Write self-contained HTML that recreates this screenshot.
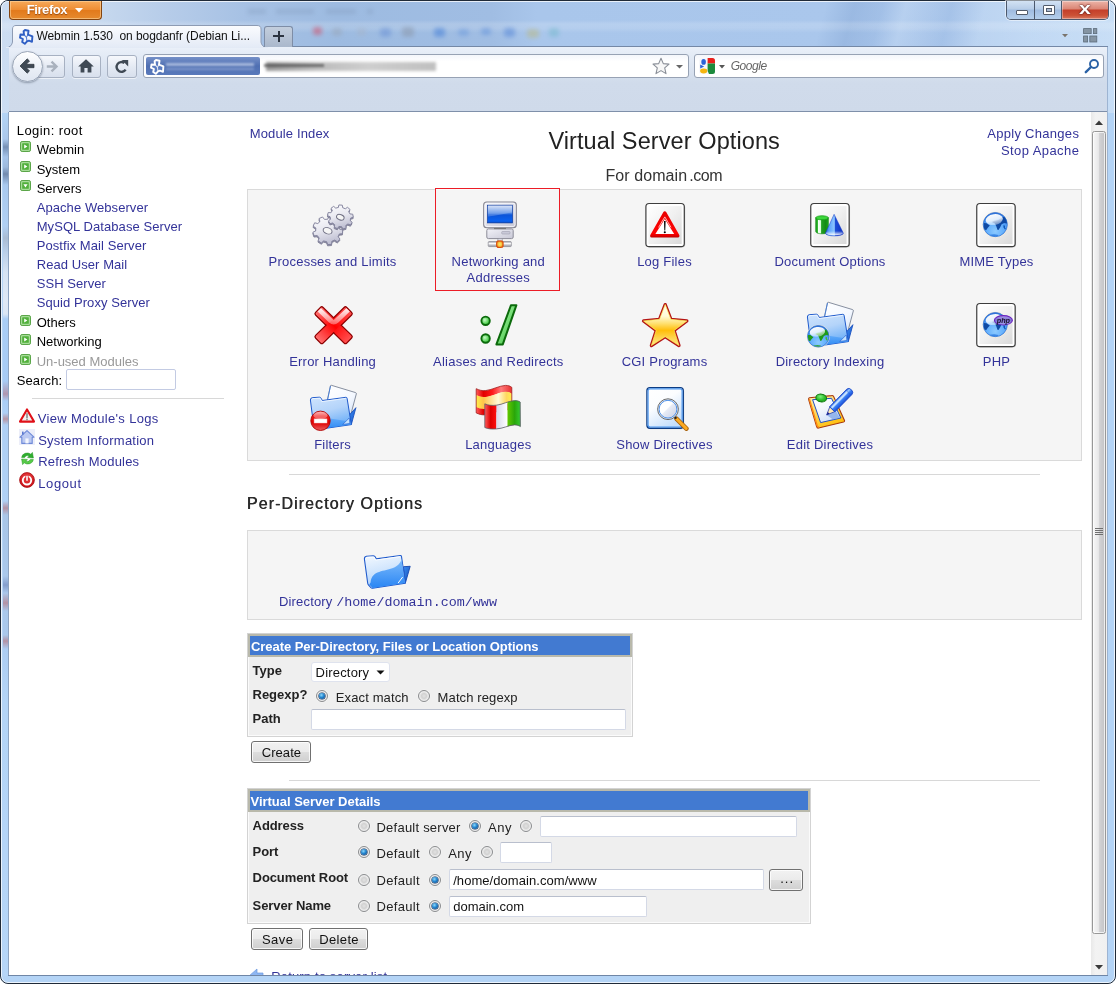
<!DOCTYPE html>
<html><head><meta charset="utf-8"><title>Webmin 1.530 on bogdanfr (Debian Linux)</title>
<style>
*{box-sizing:border-box;margin:0;padding:0}
html,body{width:1119px;height:984px;overflow:hidden}
body{position:relative;background:#b9d1ea;font-family:"Liberation Sans",Arial,sans-serif;font-size:13px;color:#000}
.abs{position:absolute}
.lnk{color:#333399}
#content{left:9px;top:112px;width:1083px;height:863px;background:#fff;overflow:hidden}
#inner{left:-9px;top:-112px;width:1119px;height:984px;will-change:transform}
.t{position:absolute;white-space:nowrap}
.panel{position:absolute;background:#f5f5f5;border:1px solid #dadada}
.hr{position:absolute;height:1px;background:#d8d8d8}
.inp{position:absolute;background:#fff;border:1px solid #d4d9e6;border-top-color:#b9bfcd;border-radius:2px}
.btn{position:absolute;border:1px solid #707070;border-radius:3px;background:linear-gradient(#f2f2f2 0,#ebebeb 48%,#dddddd 52%,#cfcfcf 100%);box-shadow:inset 0 0 0 1px rgba(255,255,255,.8)}
.radio{position:absolute;width:12px;height:12px;border-radius:50%;border:1px solid #8a8c8e;background:radial-gradient(circle at 50% 50%,#e2e2e2 0,#d2d2d2 35%,#ececec 60%,#fbfbfb 100%);box-shadow:0 0 0 .5px rgba(255,255,255,.5)}
.radio.on::after{content:"";position:absolute;left:2px;top:2px;width:6px;height:6px;border-radius:50%;background:radial-gradient(circle at 40% 35%,#8fd8fa 0,#2386d0 45%,#0c3c7c 100%);box-shadow:0 0 0 .6px #1a3a66}
.tbl{position:absolute;background:#efefef;border:1px solid #d3d3d3;box-shadow:inset 1px 0 0 #fbfbfb,inset -1px -1px 0 #fbfbfb}
.th{position:absolute;left:0;top:0;right:0;background:#427ad1;border:2px solid #b9b9ab}
#glass{left:0;top:0;width:1119px;height:984px;background:#bcd3ec;border-radius:8px 8px 0 0;overflow:hidden}
#nav{left:9px;top:47px;width:1099px;height:65px;background:#cfdaea}
body{background:#fff}
#win{left:0;top:0;width:1116px;height:984px;border:1px solid #1f2a38;border-radius:8px;overflow:hidden;background:#b4d4f6}
#glassfx{left:0;top:0;width:1117px;height:112px;background:linear-gradient(rgba(255,255,255,0) 0,rgba(255,255,255,0) 19px,rgba(255,255,255,.16) 23px,rgba(255,255,255,.14) 27px,rgba(255,255,255,0) 32px),linear-gradient(105deg,rgba(140,170,215,0) 72%,rgba(135,168,214,.45) 74.5%,rgba(140,172,218,.3) 77%,rgba(255,255,255,.12) 79%,rgba(140,172,218,.28) 83%,rgba(255,255,255,.1) 86%,rgba(255,255,255,0) 100%),linear-gradient(90deg,#ccddf2 0,#c6d8ee 9%,#b6cce9 15%,#a6c1e4 22%,#9dbbe1 30%,#a0bde3 44%,#a9c6eb 48%,#aac7ec 75%,#afcbee 85%,#bdd6f3 92%,#c8def6 100%)}
#win::after{content:"";position:absolute;left:0;top:0;right:0;bottom:0;border:1px solid rgba(255,255,255,.75);border-radius:7px;pointer-events:none}
#nav{left:9px;top:47px;width:1098px;height:65px;background:linear-gradient(#eaf0f9 0,#dbe4f1 30%,#d0dbeb 55%,#cfdaea 100%)}
#ffbtn{left:9px;top:1px;width:93px;height:19px;border-top:none !important;border:1px solid #83440f;border-radius:0 0 4px 4px;background:linear-gradient(#f6a95a 0,#ee8d33 48%,#e27a1c 52%,#e68a2e 100%);box-shadow:inset 0 0 0 1px rgba(255,220,170,.55)}
#wc{left:1006px;top:1px;width:103px;height:19px;border:1px solid #4c586c;border-top:none;border-radius:0 0 5px 5px;overflow:hidden;box-shadow:0 0 0 1px rgba(255,255,255,.5)}
#wcmin{left:0;top:0;width:28px;height:18px;background:linear-gradient(#d3e2f4 0,#b7cde8 45%,#9fbbe0 50%,#b5cfec 100%);border-right:1px solid #4c586c}
#wcmax{left:28px;top:0;width:27px;height:18px;background:linear-gradient(#d3e2f4 0,#b7cde8 45%,#9fbbe0 50%,#b5cfec 100%);border-right:1px solid #4c586c}
#wcclose{left:55px;top:0;width:47px;height:18px;background:linear-gradient(#ecb4a8 0,#dc8878 42%,#c4402a 52%,#cc5236 80%,#d87860 100%);box-shadow:inset 0 0 0 1px rgba(255,255,255,.35)}
.nb{position:absolute;border:1px solid #a7b1c2;border-radius:3px;background:linear-gradient(#f6f8fc,#e3e9f3 55%,#d8e0ed);box-shadow:0 1px 0 rgba(255,255,255,.6)}
#front{left:0;top:0;width:1119px;height:984px;will-change:transform;pointer-events:none}
</style></head><body>
<div id="win" class="abs"><div id="glassfx" class="abs"></div>
<div class="abs" style="left:311.5px;top:26.0px;width:9px;height:8px;background:#d0506a;opacity:0.55;filter:blur(2.2px);border-radius:3px"></div><div class="abs" style="left:331.0px;top:27.0px;width:10px;height:8px;background:#9aa6b8;opacity:0.5;filter:blur(2.2px);border-radius:3px"></div><div class="abs" style="left:355.5px;top:27.0px;width:9px;height:8px;background:#a8b3c4;opacity:0.4;filter:blur(2.2px);border-radius:3px"></div><div class="abs" style="left:378.5px;top:26.5px;width:11px;height:9px;background:#6c93d6;opacity:0.55;filter:blur(2.2px);border-radius:3px"></div><div class="abs" style="left:401.0px;top:26.0px;width:12px;height:10px;background:#8b98ac;opacity:0.55;filter:blur(2.2px);border-radius:3px"></div><div class="abs" style="left:432.5px;top:26.5px;width:11px;height:9px;background:#4f86d8;opacity:0.6;filter:blur(2.2px);border-radius:3px"></div><div class="abs" style="left:456.5px;top:27.5px;width:11px;height:7px;background:#6a98dc;opacity:0.5;filter:blur(2.2px);border-radius:3px"></div><div class="abs" style="left:480.0px;top:26.5px;width:10px;height:7px;background:#5f90da;opacity:0.5;filter:blur(2.2px);border-radius:3px"></div><div class="abs" style="left:502.5px;top:26.5px;width:11px;height:9px;background:#5a8ad8;opacity:0.55;filter:blur(2.2px);border-radius:3px"></div><div class="abs" style="left:526.0px;top:27.5px;width:12px;height:9px;background:#b9b98a;opacity:0.55;filter:blur(2.2px);border-radius:3px"></div><div class="abs" style="left:548.0px;top:26.5px;width:10px;height:9px;background:#6db7c8;opacity:0.45;filter:blur(2.2px);border-radius:3px"></div><div class="abs" style="left:247px;top:8px;width:18px;height:5px;background:#7f97b8;opacity:.35;filter:blur(2px)"></div><div class="abs" style="left:275px;top:8px;width:38px;height:5px;background:#7f97b8;opacity:.35;filter:blur(2px)"></div><div class="abs" style="left:325px;top:8px;width:30px;height:5px;background:#7f97b8;opacity:.35;filter:blur(2px)"></div><div class="abs" style="left:366px;top:8px;width:6px;height:5px;background:#7f97b8;opacity:.35;filter:blur(2px)"></div><div class="abs" style="left:2px;top:112px;width:6px;height:863px;background:linear-gradient(180deg,#b4d4f6 0px,#a9c6ea 26px,#6f88ad 34px,#a4c2e8 44px,#9ab6da 54px,#6b82a6 61px,#a8c8ee 72px,#b0cff3 113px,#a9b9cf 125px,#b9cde6 138px,#d9e4f2 159px,#e4ebf5 188px,#dfe8f4 201px,#a9cdf6 206px,#a6caf4 268px,#b090a8 281px,#a9cdf6 288px,#aecff5 300px,#b9909c 306px,#aecff5 312px,#b0d0f5 388px,#b48c9c 395px,#a8c4e6 402px,#a9c7ea 463px,#7f98c8 472px,#a9c7ea 480px,#b48c9c 490px,#a9c7ea 498px,#a9c7ea 522px,#b48c9c 528px,#acccf2 536px,#b4d4f6 588px,#b6d6f8 863px);opacity:.9"></div>
</div>
<div id="nav" class="abs"></div>
<div class="abs" style="left:9px;top:46px;width:1099px;height:1px;background:#7488a6"></div>
<div id="content" class="abs"><div id="inner" class="abs">
<div class="t " style="top:124.00px;font-size:13px;line-height:13px;left:16.80px;letter-spacing:0.406px;">Login: root</div>
<svg class="abs" style="left:20px;top:141.00px" width="11" height="11" viewBox="0 0 11 11"><rect x="0.5" y="0.5" width="10" height="10" rx="1.6" fill="#a6dc98" stroke="#5aa548"/><rect x="2.2" y="2.2" width="6.6" height="6.6" rx="0.6" fill="#52b03c"/><path d="M4.2 3.4 L7.4 5.5 L4.2 7.6 Z" fill="#fff"/></svg>
<div class="t " style="top:142.60px;font-size:13px;line-height:13px;color:#000;left:36.70px;letter-spacing:0px;">Webmin</div>
<svg class="abs" style="left:20px;top:161.00px" width="11" height="11" viewBox="0 0 11 11"><rect x="0.5" y="0.5" width="10" height="10" rx="1.6" fill="#a6dc98" stroke="#5aa548"/><rect x="2.2" y="2.2" width="6.6" height="6.6" rx="0.6" fill="#52b03c"/><path d="M4.2 3.4 L7.4 5.5 L4.2 7.6 Z" fill="#fff"/></svg>
<div class="t " style="top:162.60px;font-size:13px;line-height:13px;color:#000;left:36.70px;letter-spacing:0px;">System</div>
<svg class="abs" style="left:20px;top:180.10px" width="11" height="11" viewBox="0 0 11 11"><rect x="0.5" y="0.5" width="10" height="10" rx="1.6" fill="#a6dc98" stroke="#5aa548"/><rect x="2.2" y="2.2" width="6.6" height="6.6" rx="0.6" fill="#52b03c"/><path d="M3.4 4.2 L7.6 4.2 L5.5 7.4 Z" fill="#fff"/></svg>
<div class="t " style="top:181.70px;font-size:13px;line-height:13px;color:#000;left:36.70px;letter-spacing:0px;">Servers</div>
<div class="t lnk" style="top:201.10px;font-size:13px;line-height:13px;left:36.70px;letter-spacing:.07px;">Apache Webserver</div>
<div class="t lnk" style="top:220.10px;font-size:13px;line-height:13px;left:36.70px;letter-spacing:.07px;">MySQL Database Server</div>
<div class="t lnk" style="top:239.10px;font-size:13px;line-height:13px;left:36.70px;letter-spacing:.07px;">Postfix Mail Server</div>
<div class="t lnk" style="top:258.10px;font-size:13px;line-height:13px;left:36.70px;letter-spacing:.07px;">Read User Mail</div>
<div class="t lnk" style="top:277.10px;font-size:13px;line-height:13px;left:36.70px;letter-spacing:.07px;">SSH Server</div>
<div class="t lnk" style="top:296.10px;font-size:13px;line-height:13px;left:36.70px;letter-spacing:.07px;">Squid Proxy Server</div>
<svg class="abs" style="left:20px;top:314.50px" width="11" height="11" viewBox="0 0 11 11"><rect x="0.5" y="0.5" width="10" height="10" rx="1.6" fill="#a6dc98" stroke="#5aa548"/><rect x="2.2" y="2.2" width="6.6" height="6.6" rx="0.6" fill="#52b03c"/><path d="M4.2 3.4 L7.4 5.5 L4.2 7.6 Z" fill="#fff"/></svg>
<div class="t " style="top:316.10px;font-size:13px;line-height:13px;color:#000;left:36.70px;letter-spacing:0px;">Others</div>
<svg class="abs" style="left:20px;top:333.50px" width="11" height="11" viewBox="0 0 11 11"><rect x="0.5" y="0.5" width="10" height="10" rx="1.6" fill="#a6dc98" stroke="#5aa548"/><rect x="2.2" y="2.2" width="6.6" height="6.6" rx="0.6" fill="#52b03c"/><path d="M4.2 3.4 L7.4 5.5 L4.2 7.6 Z" fill="#fff"/></svg>
<div class="t " style="top:335.10px;font-size:13px;line-height:13px;color:#000;left:36.70px;letter-spacing:0px;">Networking</div>
<svg class="abs" style="left:20px;top:353.50px" width="11" height="11" viewBox="0 0 11 11"><rect x="0.5" y="0.5" width="10" height="10" rx="1.6" fill="#a6dc98" stroke="#5aa548"/><rect x="2.2" y="2.2" width="6.6" height="6.6" rx="0.6" fill="#52b03c"/><path d="M4.2 3.4 L7.4 5.5 L4.2 7.6 Z" fill="#fff"/></svg>
<div class="t " style="top:355.10px;font-size:13px;line-height:13px;color:#999;left:36.70px;letter-spacing:0px;">Un-used Modules</div>
<div class="t " style="top:374.10px;font-size:13px;line-height:13px;left:16.80px;letter-spacing:0.083px;">Search:</div>
<div class="inp" style="left:66px;top:369px;width:110px;height:21px;border-color:#c3cbe3"></div>
<div class="hr" style="left:32px;top:398px;width:192px"></div>
<svg class="abs" style="left:19px;top:408px" width="16" height="15" viewBox="0 0 16 15"><path d="M8 1.4 L15 13.6 L1 13.6 Z" fill="#f2f2f2" stroke="#e01018" stroke-width="2.1" stroke-linejoin="round"/><rect x="7.2" y="5.2" width="1.6" height="5.2" fill="#8a8a8a"/><rect x="7.2" y="11" width="1.6" height="1.3" fill="#8a8a8a"/></svg>
<div class="t lnk" style="top:411.70px;font-size:13px;line-height:13px;left:37.80px;letter-spacing:0.325px;">View Module&#x27;s Logs</div>
<svg class="abs" style="left:19px;top:429px" width="16" height="16" viewBox="0 0 16 16"><rect width="16" height="16" fill="#eceef9"/><path d="M8 1.6 L15 8.2 L13.2 8.2 L13.2 14.4 L2.8 14.4 L2.8 8.2 L1 8.2 Z" fill="#bccaf2" stroke="#6f8ad8" stroke-width="1.1" stroke-linejoin="round"/><rect x="6.4" y="9.4" width="3.2" height="5" fill="#f4f6fd"/><rect x="3" y="2.6" width="1.6" height="3" fill="#5a78d0"/></svg>
<div class="t lnk" style="top:433.80px;font-size:13px;line-height:13px;left:38.20px;letter-spacing:0.224px;">System Information</div>
<svg class="abs" style="left:20px;top:451px" width="15" height="15" viewBox="0 0 15 15"><path d="M1.6 6.4 A5.6 5 0 0 1 10.8 3.2 L12.4 1.4 L13.4 7 L7.6 6.6 L9.2 4.9 A3.6 3 0 0 0 4.6 6.4 Z" fill="#2fae2f" stroke="#1f921f" stroke-width=".5"/><path d="M13.4 8.6 A5.6 5 0 0 1 4.2 11.8 L2.6 13.6 L1.6 8 L7.4 8.4 L5.8 10.1 A3.6 3 0 0 0 10.4 8.6 Z" fill="#58cc48" stroke="#1f921f" stroke-width=".5"/></svg>
<div class="t lnk" style="top:454.60px;font-size:13px;line-height:13px;left:38.20px;letter-spacing:0.188px;">Refresh Modules</div>
<svg class="abs" style="left:19px;top:472px" width="16" height="16" viewBox="0 0 16 16"><defs><radialGradient id="lgo" cx=".5" cy=".35" r=".7"><stop offset="0" stop-color="#f04a4a"/><stop offset="1" stop-color="#c40810"/></radialGradient></defs><circle cx="8" cy="8" r="7.4" fill="url(#lgo)" stroke="#a80c12" stroke-width=".8"/><circle cx="8" cy="8.3" r="4.2" fill="none" stroke="#fff" stroke-width="1.9"/><rect x="6.5" y="3" width="3" height="5.6" fill="#d81820"/><rect x="7.2" y="3.6" width="1.6" height="5.2" rx=".4" fill="#fff"/></svg>
<div class="t lnk" style="top:476.70px;font-size:13px;line-height:13px;left:38.20px;letter-spacing:0.627px;">Logout</div>
<div class="t lnk" style="top:126.75px;font-size:13px;line-height:13px;left:249.70px;letter-spacing:0.145px;">Module Index</div>
<div class="t " style="top:129.91px;font-size:23.5px;line-height:23.5px;color:#222;left:548.40px;letter-spacing:0.095px;">Virtual Server Options</div>
<div class="t " style="top:168.06px;font-size:16px;line-height:16px;color:#333;left:605.45px;letter-spacing:0.081px;">For domain</div>
<div class="t " style="top:168.06px;font-size:16px;line-height:16px;color:#333;left:689.20px;letter-spacing:-0.424px;">.com</div>
<div class="t lnk" style="top:127.10px;font-size:13px;line-height:13px;left:987.20px;letter-spacing:0.294px;">Apply Changes</div>
<div class="t lnk" style="top:144.10px;font-size:13px;line-height:13px;left:1001.00px;letter-spacing:0.417px;">Stop Apache</div>
<div class="panel" style="left:247px;top:189px;width:835px;height:272px"></div>
<div class="abs" style="left:435px;top:188px;width:125px;height:103px;border:1px solid #ec1c26;box-shadow:inset 0 1px 0 #fbfbfb"></div>
<svg class="abs" style="left:308.5px;top:200px" width="48" height="48" viewBox="0 0 48 48"><defs><linearGradient id="g1" x1="0" y1="0" x2=".8" y2="1"><stop offset="0" stop-color="#ffffff"/><stop offset=".5" stop-color="#e8e8f0"/><stop offset="1" stop-color="#b4b4ca"/></linearGradient></defs><g transform="translate(18.7 30.5) rotate(20) scale(1 .92)"><path d="M11.92 2.42 L14.59 4.26 L12.97 7.93 L9.81 7.19 L7.58 9.51 L8.44 12.64 L4.83 14.41 L2.89 11.81 L-0.31 12.16 L-1.66 15.11 L-5.56 14.15 L-5.38 10.91 L-8.05 9.11 L-10.98 10.51 L-13.35 7.26 L-11.13 4.90 L-12.03 1.81 L-15.17 0.99 L-14.90 -3.02 L-11.67 -3.40 L-10.37 -6.35 L-12.26 -8.99 L-9.47 -11.89 L-6.75 -10.11 L-3.87 -11.53 L-3.61 -14.76 L0.39 -15.20 L1.33 -12.09 L4.45 -11.32 L6.72 -13.63 L10.06 -11.39 L8.79 -8.41 L10.68 -5.81 L13.91 -6.12 L15.03 -2.26 L12.13 -0.79 Z" fill="#8e8ea6" stroke="#7e7e94" stroke-width=".8" stroke-linejoin="round" transform="translate(.3 1.3)"/><path d="M11.92 2.42 L14.59 4.26 L12.97 7.93 L9.81 7.19 L7.58 9.51 L8.44 12.64 L4.83 14.41 L2.89 11.81 L-0.31 12.16 L-1.66 15.11 L-5.56 14.15 L-5.38 10.91 L-8.05 9.11 L-10.98 10.51 L-13.35 7.26 L-11.13 4.90 L-12.03 1.81 L-15.17 0.99 L-14.90 -3.02 L-11.67 -3.40 L-10.37 -6.35 L-12.26 -8.99 L-9.47 -11.89 L-6.75 -10.11 L-3.87 -11.53 L-3.61 -14.76 L0.39 -15.20 L1.33 -12.09 L4.45 -11.32 L6.72 -13.63 L10.06 -11.39 L8.79 -8.41 L10.68 -5.81 L13.91 -6.12 L15.03 -2.26 L12.13 -0.79 Z" fill="url(#g1)" stroke="#80809a" stroke-width=".85" stroke-linejoin="round"/><ellipse cx="0" cy=".3" rx="4.56" ry="3.34" fill="#f5f5f5" stroke="#6e6e82" stroke-width="1"/></g><g transform="translate(31.4 17) rotate(20) scale(1 .92)"><path d="M10.40 0.00 L12.95 1.09 L12.22 4.45 L9.44 4.36 L7.97 6.68 L9.22 9.16 L6.50 11.26 L4.43 9.41 L1.81 10.24 L1.18 12.95 L-2.26 12.80 L-2.66 10.05 L-5.20 9.01 L-7.42 10.67 L-9.96 8.36 L-8.50 5.99 L-9.77 3.56 L-12.55 3.41 L-13.00 0.00 L-10.36 -0.87 L-9.77 -3.56 L-11.80 -5.45 L-9.96 -8.36 L-7.38 -7.33 L-5.20 -9.01 L-5.54 -11.76 L-2.26 -12.80 L-0.94 -10.36 L1.81 -10.24 L3.32 -12.57 L6.50 -11.26 L5.94 -8.54 L7.97 -6.68 L10.62 -7.49 L12.22 -4.45 L10.04 -2.73 Z" fill="#8e8ea6" stroke="#7e7e94" stroke-width=".8" stroke-linejoin="round" transform="translate(.3 1.3)"/><path d="M10.40 0.00 L12.95 1.09 L12.22 4.45 L9.44 4.36 L7.97 6.68 L9.22 9.16 L6.50 11.26 L4.43 9.41 L1.81 10.24 L1.18 12.95 L-2.26 12.80 L-2.66 10.05 L-5.20 9.01 L-7.42 10.67 L-9.96 8.36 L-8.50 5.99 L-9.77 3.56 L-12.55 3.41 L-13.00 0.00 L-10.36 -0.87 L-9.77 -3.56 L-11.80 -5.45 L-9.96 -8.36 L-7.38 -7.33 L-5.20 -9.01 L-5.54 -11.76 L-2.26 -12.80 L-0.94 -10.36 L1.81 -10.24 L3.32 -12.57 L6.50 -11.26 L5.94 -8.54 L7.97 -6.68 L10.62 -7.49 L12.22 -4.45 L10.04 -2.73 Z" fill="url(#g1)" stroke="#80809a" stroke-width=".85" stroke-linejoin="round"/><ellipse cx="0" cy=".3" rx="3.90" ry="2.86" fill="#f5f5f5" stroke="#6e6e82" stroke-width="1"/></g></svg>
<div class="t lnk" style="top:255.00px;font-size:13px;line-height:13px;left:32.60px;width:600px;text-align:center;letter-spacing:.22px;">Processes and Limits</div>
<svg class="abs" style="left:474.5px;top:200px" width="48" height="48" viewBox="0 0 48 48"><defs><linearGradient id="g2" x1="0" y1="0" x2="0" y2="1"><stop offset="0" stop-color="#d4dff6"/><stop offset=".45" stop-color="#4d86e4"/><stop offset=".55" stop-color="#0c54d8"/><stop offset=".9" stop-color="#0a62f0"/><stop offset="1" stop-color="#0848c0"/></linearGradient><linearGradient id="g3" x1="0" y1="0" x2="1" y2="1"><stop offset="0" stop-color="#f2f2f8"/><stop offset="1" stop-color="#c8c8d6"/></linearGradient><linearGradient id="g4" x1="0" y1="0" x2="0" y2="1"><stop offset="0" stop-color="#9a9aa6"/><stop offset=".35" stop-color="#ffffff"/><stop offset="1" stop-color="#8c8c98"/></linearGradient><radialGradient id="g5"><stop offset="0" stop-color="#fbe47a"/><stop offset=".6" stop-color="#f6c83a"/><stop offset="1" stop-color="#e8601a"/></radialGradient></defs><rect x="8.7" y="2" width="32.6" height="25.8" rx="3" fill="url(#g3)" stroke="#84848f" stroke-width="1.1"/><rect x="10" y="3.3" width="30" height="23.2" rx="2" fill="none" stroke="#fafafd" stroke-width=".8"/><rect x="12.5" y="5.2" width="25" height="17.7" fill="url(#g2)" stroke="#0a3aa0" stroke-width=".7"/><path d="M13 5.6 L37 5.6 L37 12.5 C30 13.5 22 16 13 16.5 Z" fill="#fff" opacity=".22"/><rect x="11.8" y="28.9" width="26.4" height="9.7" rx="1.6" fill="url(#g3)" stroke="#8c8c98" stroke-width="1"/><rect x="19" y="27.9" width="12" height="1.2" fill="#777"/><rect x="26.7" y="31.5" width="8.3" height="2.5" rx=".8" fill="#c9c9d8" stroke="#a0a0b0" stroke-width=".6"/><rect x="22.9" y="38.6" width="4.3" height="3.2" fill="#dcdce6" stroke="#8c8c98" stroke-width=".6"/><rect x="13.2" y="41.6" width="23.2" height="5" rx="1" fill="url(#g4)" stroke="#808088" stroke-width=".6"/><rect x="21.6" y="40.9" width="6.5" height="6.6" rx="1.4" fill="url(#g5)" stroke="#d8500a" stroke-width="1"/></svg>
<div class="t lnk" style="top:255.00px;font-size:13px;line-height:13px;left:198.30px;width:600px;text-align:center;letter-spacing:.22px;">Networking and</div>
<div class="t lnk" style="top:271.25px;font-size:13px;line-height:13px;left:198.30px;width:600px;text-align:center;letter-spacing:.22px;">Addresses</div>
<svg class="abs" style="left:641px;top:200px" width="48" height="48" viewBox="0 0 48 48"><defs><linearGradient id="g7" x1="0" y1="0" x2="1" y2="1"><stop offset="0" stop-color="#ffffff"/><stop offset=".5" stop-color="#f0f0f0"/><stop offset="1" stop-color="#d9d9d9"/></linearGradient></defs><rect x="5.80" y="4.40" width="38.40" height="43.10" rx="3.2" fill="#000" opacity=".18"/><rect x="4.9" y="3.5" width="38.40" height="43.10" rx="3.2" fill="#fff" stroke="#3e3e3e" stroke-width="1.2"/><rect x="7.50" y="6.10" width="33.20" height="37.90" fill="url(#g7)"/><defs><linearGradient id="g6" gradientUnits="userSpaceOnUse" x1="0" y1="11" x2="0" y2="38.5"><stop offset="0" stop-color="#e80000"/><stop offset=".8" stop-color="#ff0404"/><stop offset=".9" stop-color="#e00000"/><stop offset="1" stop-color="#a40000"/></linearGradient></defs><path d="M23.8 12.9 L36.9 35.9 L10.7 35.9 Z" fill="url(#g6)" stroke="url(#g6)" stroke-width="3.2" stroke-linejoin="round"/><path d="M23.8 19 L33.2 34.1 L14.4 34.1 Z" fill="#fff"/><path d="M17.6 27.4 L23.8 16.9 L30 27.4" fill="none" stroke="#ffd0d0" stroke-width="1" opacity=".85"/><path d="M23 21 L24.6 21 L24.25 30.6 L23.35 30.6 Z" fill="#000"/><circle cx="23.8" cy="32.3" r="1.05" fill="#000"/></svg>
<div class="t lnk" style="top:255.00px;font-size:13px;line-height:13px;left:364.50px;width:600px;text-align:center;letter-spacing:.22px;">Log Files</div>
<svg class="abs" style="left:806px;top:200px" width="48" height="48" viewBox="0 0 48 48"><defs><linearGradient id="g11" x1="0" y1="0" x2="1" y2="1"><stop offset="0" stop-color="#ffffff"/><stop offset=".5" stop-color="#f0f0f0"/><stop offset="1" stop-color="#d9d9d9"/></linearGradient></defs><rect x="5.65" y="4.40" width="38.40" height="43.10" rx="3.2" fill="#000" opacity=".18"/><rect x="4.75" y="3.5" width="38.40" height="43.10" rx="3.2" fill="#fff" stroke="#3e3e3e" stroke-width="1.2"/><rect x="7.35" y="6.10" width="33.20" height="37.90" fill="url(#g11)"/><defs><linearGradient id="g8" x1="0" y1="0" x2="1" y2="0"><stop offset="0" stop-color="#149414"/><stop offset=".18" stop-color="#3cc43c"/><stop offset=".22" stop-color="#f4fff4"/><stop offset=".42" stop-color="#d8ffd8"/><stop offset=".46" stop-color="#23a023"/><stop offset=".8" stop-color="#138a13"/><stop offset="1" stop-color="#1faa1f"/></linearGradient><linearGradient id="g9" x1="0" y1="0" x2="1" y2="0"><stop offset="0" stop-color="#1d48d8"/><stop offset=".2" stop-color="#5aa2fc"/><stop offset=".5" stop-color="#8cc6ff"/><stop offset=".53" stop-color="#1e50d8"/><stop offset="1" stop-color="#0a2cc0"/></linearGradient><linearGradient id="g10" x1="0" y1="0" x2="0" y2="1"><stop offset="0" stop-color="#fff" stop-opacity="0"/><stop offset="1" stop-color="#fff" stop-opacity=".95"/></linearGradient></defs><path d="M9.7 17.8 L9.7 31.6 A6.35 2.2 0 0 0 22.4 31.6 L22.4 17.8 Z" fill="url(#g8)" stroke="#0f860f" stroke-width=".6"/><ellipse cx="16.05" cy="17.8" rx="6.35" ry="2" fill="#3cd63c" stroke="#16a016" stroke-width=".8"/><path d="M28.1 14.3 L37.4 33.3 A9 2.6 0 0 1 19.4 33.3 Z" fill="url(#g9)" stroke="#1a3cc8" stroke-width=".5"/><path d="M21.2 31 L35.6 31 L37.2 33.3 A9 2.5 0 0 1 19.6 33.3 Z" fill="url(#g10)"/></svg>
<div class="t lnk" style="top:255.00px;font-size:13px;line-height:13px;left:530.00px;width:600px;text-align:center;letter-spacing:.22px;">Document Options</div>
<svg class="abs" style="left:972px;top:200px" width="48" height="48" viewBox="0 0 48 48"><defs><linearGradient id="g12" x1="0" y1="0" x2="1" y2="1"><stop offset="0" stop-color="#ffffff"/><stop offset=".5" stop-color="#f0f0f0"/><stop offset="1" stop-color="#d9d9d9"/></linearGradient></defs><rect x="5.65" y="4.40" width="38.40" height="43.10" rx="3.2" fill="#000" opacity=".18"/><rect x="4.75" y="3.5" width="38.40" height="43.10" rx="3.2" fill="#fff" stroke="#3e3e3e" stroke-width="1.2"/><rect x="7.35" y="6.10" width="33.20" height="37.90" fill="url(#g12)"/><defs><radialGradient id="g13" cx=".5" cy=".78" r=".8"><stop offset="0" stop-color="#8ccaff"/><stop offset=".45" stop-color="#62aefc"/><stop offset=".8" stop-color="#3c88ea"/><stop offset="1" stop-color="#2a68d0"/></radialGradient><linearGradient id="g14" x1="0" y1="0" x2=".25" y2="1"><stop offset="0" stop-color="#fff" stop-opacity="1"/><stop offset=".6" stop-color="#fff" stop-opacity=".85"/><stop offset="1" stop-color="#fff" stop-opacity=".45"/></linearGradient><clipPath id="c15"><circle cx="23.3" cy="24.6" r="11.799999999999999"/></clipPath></defs><circle cx="23.3" cy="24.6" r="12.799999999999999" fill="#fdf1d6" opacity=".85"/><circle cx="23.3" cy="24.6" r="12.1" fill="url(#g13)" stroke="#2e6ed2" stroke-width=".7"/><g clip-path="url(#c15)"><path d="M11.50 23.03 14.45 23.22 17.79 25.58 15.82 27.75 14.25 29.91 11.50 29.52 Z" fill="#0f4aa4"/><path d="M19.76 22.04 22.32 20.67 26.25 20.07 30.19 17.22 33.14 16.73 35.60 21.65 35.10 23.62 32.15 23.03 29.60 24.21 28.22 27.16 26.45 29.91 25.46 29.72 24.28 26.17 22.91 23.42 Z" fill="#0f4aa4"/><path d="M31.56 24.99 32.94 25.78 33.04 27.75 34.32 29.13 32.74 29.32 31.37 27.35 Z" fill="#0c58b8"/><path d="M17.40 34.83 22.32 34.24 26.25 35.03 25.27 37.00 19.37 37.00 Z" fill="#2a7ae0" opacity=".8"/><ellipse cx="23.00" cy="19.48" rx="8.66" ry="5.41" fill="url(#g14)" transform="rotate(-8 23.3 24.6)"/></g></svg>
<div class="t lnk" style="top:255.00px;font-size:13px;line-height:13px;left:696.50px;width:600px;text-align:center;letter-spacing:.22px;">MIME Types</div>
<svg class="abs" style="left:308.5px;top:300px" width="48" height="48" viewBox="0 0 48 48"><defs><linearGradient id="g16" gradientUnits="userSpaceOnUse" x1="-22" y1="0" x2="22" y2="0"><stop offset="0" stop-color="#ff7272"/><stop offset=".5" stop-color="#ff0000"/><stop offset="1" stop-color="#ff5252"/></linearGradient><linearGradient id="g17" x1="0" y1="0" x2="0" y2="1"><stop offset="0" stop-color="#fff" stop-opacity=".92"/><stop offset="1" stop-color="#fff" stop-opacity=".35"/></linearGradient></defs><rect x="-21.8" y="-5.3" width="43.6" height="10.6" rx="1.8" transform="translate(24.6 25.2) rotate(44.5)" fill="url(#g16)" stroke="#8e0000" stroke-width="1.4"/><rect x="-21.8" y="-5.3" width="43.6" height="10.6" rx="1.8" transform="translate(24.6 25.2) rotate(-44.5)" fill="url(#g16)" stroke="#8e0000" stroke-width="1.4"/><rect x="-21.1" y="-4.6" width="42.2" height="9.2" rx="1.2" transform="translate(24.6 25.2) rotate(44.5)" fill="url(#g16)"/><rect x="-21.1" y="-4.6" width="42.2" height="9.2" rx="1.2" transform="translate(24.6 25.2) rotate(-44.5)" fill="url(#g16)"/><path d="M12 8.2 L8.6 11.6 L20 22.6 C23 25.2 26.4 25.2 29.4 22.6 L40.8 11.6 L37.4 8.2 L24.7 20 Z" fill="url(#g17)"/></svg>
<div class="t lnk" style="top:354.50px;font-size:13px;line-height:13px;left:32.60px;width:600px;text-align:center;letter-spacing:.22px;">Error Handling</div>
<svg class="abs" style="left:474.5px;top:300px" width="48" height="48" viewBox="0 0 48 48"><defs><radialGradient id="g18" cx=".4" cy=".4" r=".7"><stop offset="0" stop-color="#c8f8c8"/><stop offset=".6" stop-color="#5cd65c"/><stop offset="1" stop-color="#2fb02f"/></radialGradient><linearGradient id="g19" x1="0" y1="0" x2="1" y2="1"><stop offset="0" stop-color="#e0ffe0"/><stop offset=".45" stop-color="#7be07b"/><stop offset="1" stop-color="#2fb82f"/></linearGradient></defs><circle cx="10.6" cy="20.8" r="4.2" fill="url(#g18)" stroke="#0b6a0b" stroke-width="1.9"/><circle cx="10.6" cy="38.5" r="4.2" fill="url(#g18)" stroke="#0b6a0b" stroke-width="1.9"/><path d="M36 5.2 L41.4 5.2 L27.8 44.4 L21.4 44.4 Z" fill="url(#g19)" stroke="#0b6a0b" stroke-width="2" stroke-linejoin="round"/></svg>
<div class="t lnk" style="top:354.50px;font-size:13px;line-height:13px;left:198.30px;width:600px;text-align:center;letter-spacing:.22px;">Aliases and Redirects</div>
<svg class="abs" style="left:641px;top:300px" width="48" height="48" viewBox="0 0 48 48"><defs><linearGradient id="g20" x1="0" y1="0" x2="0" y2="1"><stop offset="0" stop-color="#fffef0"/><stop offset=".28" stop-color="#fffbd8"/><stop offset=".46" stop-color="#ffe070"/><stop offset=".63" stop-color="#ffbe0a"/><stop offset=".8" stop-color="#ffd24a"/><stop offset="1" stop-color="#ffe88a"/></linearGradient></defs><path d="M24.20 4.60 L29.87 19.35 L45.84 20.95 L33.08 30.40 L38.00 45.52 L24.20 36.64 L10.40 45.52 L15.22 30.40 L2.56 20.95 L18.53 19.35 Z" fill="#b41414" stroke="#b41414" stroke-width="3.3" stroke-linejoin="round"/><path d="M24.20 4.60 L29.87 19.35 L45.84 20.95 L33.08 30.40 L38.00 45.52 L24.20 36.64 L10.40 45.52 L15.22 30.40 L2.56 20.95 L18.53 19.35 Z" fill="url(#g20)" stroke="#fff25a" stroke-width=".7" stroke-linejoin="round"/></svg>
<div class="t lnk" style="top:354.50px;font-size:13px;line-height:13px;left:364.50px;width:600px;text-align:center;letter-spacing:.22px;">CGI Programs</div>
<svg class="abs" style="left:806px;top:300px" width="48" height="48" viewBox="0 0 48 48"><defs><linearGradient id="g21" x1="0" y1="0" x2="1" y2="1"><stop offset="0" stop-color="#ffffff"/><stop offset=".6" stop-color="#f4f8ff"/><stop offset="1" stop-color="#cfe0f8"/></linearGradient><linearGradient id="g22" x1="0" y1="0" x2=".35" y2="1"><stop offset="0" stop-color="#cfe4fd"/><stop offset=".5" stop-color="#b4d4fa"/><stop offset="1" stop-color="#6aaef8"/></linearGradient><linearGradient id="g23" x1="0" y1="0" x2="0" y2="1"><stop offset="0" stop-color="#6ab0fa"/><stop offset="1" stop-color="#2a88f4"/></linearGradient><linearGradient id="g24" x1="0" y1="0" x2="1" y2="1"><stop offset="0" stop-color="#3a8af0"/><stop offset="1" stop-color="#1a5ac8"/></linearGradient></defs><path d="M22.4 2.3 L46.6 9.6 Q47.6 10 47.3 11 L41.4 33 L16.5 26 L21.4 3 Q21.6 2.1 22.4 2.3 Z" fill="url(#g21)" stroke="#6a7488" stroke-width=".8"/><path d="M21.5 3 L16.5 26" stroke="#3a7ae0" stroke-width=".8"/><path d="M40.4 32 L46.9 24.7 L42.3 41.6 Z" fill="url(#g24)" stroke="#1a50c0" stroke-width=".9" stroke-linejoin="round"/><path d="M1.4 17 Q1.3 15 3.2 14.7 L10.4 14.2 Q11.6 14.2 12.2 15.4 L13.4 17.5 L36.8 14.3 Q37.9 14.2 38.1 15.3 L42.3 41.6 L9.5 46.4 Q8.4 46.5 7.6 45.6 L5.2 43 Q4.6 42.3 4.5 41.4 Z" fill="url(#g22)" stroke="#1f5acc" stroke-width="1" stroke-linejoin="round"/><path d="M4.6 33 L40.6 38.4 L42.1 41.4 L9.5 46.2 L5.2 42.6 Z" fill="url(#g23)" opacity=".95"/><path d="M3 16.4 L3.6 15.6 L10.6 15.2 L11.4 16 L12.8 18.6 L36.8 15.4" fill="none" stroke="#f4f9ff" stroke-width=".9" opacity=".9"/><path d="M33.8 41.4 L40.2 35 L40.9 40.4 Z" fill="#c4e2ff" stroke="#1f5acc" stroke-width=".6"/><defs><radialGradient id="g25" cx=".5" cy=".78" r=".8"><stop offset="0" stop-color="#8ccaff"/><stop offset=".45" stop-color="#62aefc"/><stop offset=".8" stop-color="#3c88ea"/><stop offset="1" stop-color="#2a68d0"/></radialGradient><linearGradient id="g26" x1="0" y1="0" x2=".25" y2="1"><stop offset="0" stop-color="#fff" stop-opacity="1"/><stop offset=".6" stop-color="#fff" stop-opacity=".85"/><stop offset="1" stop-color="#fff" stop-opacity=".45"/></linearGradient><clipPath id="c27"><circle cx="12.3" cy="36.3" r="10.5"/></clipPath></defs><circle cx="12.3" cy="36.3" r="11.5" fill="#fdf1d6" opacity=".85"/><circle cx="12.3" cy="36.3" r="10.8" fill="url(#g25)" stroke="#2e6ed2" stroke-width=".7"/><g clip-path="url(#c27)"><path d="M1.76 34.90 4.40 35.07 7.38 37.18 5.63 39.11 4.22 41.04 1.76 40.69 Z" fill="#1f9a1a"/><path d="M9.14 34.02 11.42 32.79 14.93 32.26 18.45 29.71 21.08 29.28 23.28 33.67 22.84 35.42 20.20 34.90 17.92 35.95 16.69 38.58 15.11 41.04 14.23 40.87 13.18 37.70 11.95 35.25 Z" fill="#1f9a1a"/><path d="M19.68 36.65 20.90 37.35 20.99 39.11 22.13 40.34 20.73 40.51 19.50 38.76 Z" fill="#3fbf2a"/><path d="M7.03 45.43 11.42 44.90 14.93 45.61 14.06 47.36 8.79 47.36 Z" fill="#2aa022" opacity=".8"/><ellipse cx="12.04" cy="31.73" rx="7.73" ry="4.83" fill="url(#g26)" transform="rotate(-8 12.3 36.3)"/></g></svg>
<div class="t lnk" style="top:354.50px;font-size:13px;line-height:13px;left:530.00px;width:600px;text-align:center;letter-spacing:.22px;">Directory Indexing</div>
<svg class="abs" style="left:972px;top:300px" width="48" height="48" viewBox="0 0 48 48"><defs><linearGradient id="g29" x1="0" y1="0" x2="1" y2="1"><stop offset="0" stop-color="#ffffff"/><stop offset=".5" stop-color="#f0f0f0"/><stop offset="1" stop-color="#d9d9d9"/></linearGradient></defs><rect x="5.65" y="4.40" width="38.40" height="43.10" rx="3.2" fill="#000" opacity=".18"/><rect x="4.75" y="3.5" width="38.40" height="43.10" rx="3.2" fill="#fff" stroke="#3e3e3e" stroke-width="1.2"/><rect x="7.35" y="6.10" width="33.20" height="37.90" fill="url(#g29)"/><defs><radialGradient id="g30" cx=".5" cy=".78" r=".8"><stop offset="0" stop-color="#8ccaff"/><stop offset=".45" stop-color="#62aefc"/><stop offset=".8" stop-color="#3c88ea"/><stop offset="1" stop-color="#2a68d0"/></radialGradient><linearGradient id="g31" x1="0" y1="0" x2=".25" y2="1"><stop offset="0" stop-color="#fff" stop-opacity="1"/><stop offset=".6" stop-color="#fff" stop-opacity=".85"/><stop offset="1" stop-color="#fff" stop-opacity=".45"/></linearGradient><clipPath id="c32"><circle cx="23.3" cy="24.6" r="11.799999999999999"/></clipPath></defs><circle cx="23.3" cy="24.6" r="12.799999999999999" fill="#fdf1d6" opacity=".85"/><circle cx="23.3" cy="24.6" r="12.1" fill="url(#g30)" stroke="#2e6ed2" stroke-width=".7"/><g clip-path="url(#c32)"><path d="M11.50 23.03 14.45 23.22 17.79 25.58 15.82 27.75 14.25 29.91 11.50 29.52 Z" fill="#0f4aa4"/><path d="M19.76 22.04 22.32 20.67 26.25 20.07 30.19 17.22 33.14 16.73 35.60 21.65 35.10 23.62 32.15 23.03 29.60 24.21 28.22 27.16 26.45 29.91 25.46 29.72 24.28 26.17 22.91 23.42 Z" fill="#0f4aa4"/><path d="M31.56 24.99 32.94 25.78 33.04 27.75 34.32 29.13 32.74 29.32 31.37 27.35 Z" fill="#0c58b8"/><path d="M17.40 34.83 22.32 34.24 26.25 35.03 25.27 37.00 19.37 37.00 Z" fill="#2a7ae0" opacity=".8"/><ellipse cx="23.00" cy="19.48" rx="8.66" ry="5.41" fill="url(#g31)" transform="rotate(-8 23.3 24.6)"/></g><defs><linearGradient id="g28" x1="0" y1="0" x2="0" y2="1"><stop offset="0" stop-color="#a89ae6"/><stop offset=".5" stop-color="#7f72d2"/><stop offset="1" stop-color="#a8a8ee"/></linearGradient></defs><ellipse cx="31.4" cy="20.3" rx="9" ry="4.7" fill="url(#g28)" stroke="#6a22c0" stroke-width="1.1"/><text x="31.4" y="22.5" text-anchor="middle" font-family="Liberation Sans,sans-serif" font-weight="bold" font-style="italic" font-size="7.3" fill="#1c1430">php</text></svg>
<div class="t lnk" style="top:354.50px;font-size:13px;line-height:13px;left:696.50px;width:600px;text-align:center;letter-spacing:.22px;">PHP</div>
<svg class="abs" style="left:308.5px;top:383px" width="48" height="48" viewBox="0 0 48 48"><defs><linearGradient id="g34" x1="0" y1="0" x2="1" y2="1"><stop offset="0" stop-color="#ffffff"/><stop offset=".6" stop-color="#f4f8ff"/><stop offset="1" stop-color="#cfe0f8"/></linearGradient><linearGradient id="g35" x1="0" y1="0" x2=".35" y2="1"><stop offset="0" stop-color="#cfe4fd"/><stop offset=".5" stop-color="#b4d4fa"/><stop offset="1" stop-color="#6aaef8"/></linearGradient><linearGradient id="g36" x1="0" y1="0" x2="0" y2="1"><stop offset="0" stop-color="#6ab0fa"/><stop offset="1" stop-color="#2a88f4"/></linearGradient><linearGradient id="g37" x1="0" y1="0" x2="1" y2="1"><stop offset="0" stop-color="#3a8af0"/><stop offset="1" stop-color="#1a5ac8"/></linearGradient></defs><path d="M22.4 2.3 L46.6 9.6 Q47.6 10 47.3 11 L41.4 33 L16.5 26 L21.4 3 Q21.6 2.1 22.4 2.3 Z" fill="url(#g34)" stroke="#6a7488" stroke-width=".8"/><path d="M21.5 3 L16.5 26" stroke="#3a7ae0" stroke-width=".8"/><path d="M40.4 32 L46.9 24.7 L42.3 41.6 Z" fill="url(#g37)" stroke="#1a50c0" stroke-width=".9" stroke-linejoin="round"/><path d="M1.4 17 Q1.3 15 3.2 14.7 L10.4 14.2 Q11.6 14.2 12.2 15.4 L13.4 17.5 L36.8 14.3 Q37.9 14.2 38.1 15.3 L42.3 41.6 L9.5 46.4 Q8.4 46.5 7.6 45.6 L5.2 43 Q4.6 42.3 4.5 41.4 Z" fill="url(#g35)" stroke="#1f5acc" stroke-width="1" stroke-linejoin="round"/><path d="M4.6 33 L40.6 38.4 L42.1 41.4 L9.5 46.2 L5.2 42.6 Z" fill="url(#g36)" opacity=".95"/><path d="M3 16.4 L3.6 15.6 L10.6 15.2 L11.4 16 L12.8 18.6 L36.8 15.4" fill="none" stroke="#f4f9ff" stroke-width=".9" opacity=".9"/><path d="M33.8 41.4 L40.2 35 L40.9 40.4 Z" fill="#c4e2ff" stroke="#1f5acc" stroke-width=".6"/><defs><linearGradient id="g33" x1="0" y1="0" x2="0" y2="1"><stop offset="0" stop-color="#ff9a9a"/><stop offset=".25" stop-color="#f01818"/><stop offset=".6" stop-color="#e00000"/><stop offset="1" stop-color="#e86060"/></linearGradient></defs><circle cx="11.5" cy="37.8" r="9.7" fill="url(#g33)" stroke="#b00000" stroke-width=".9"/><ellipse cx="11.5" cy="32.4" rx="7" ry="3.6" fill="#fff" opacity=".35"/><rect x="5.1" y="35.9" width="12.9" height="4.1" fill="#fff" stroke="#f4c0c0" stroke-width=".5"/></svg>
<div class="t lnk" style="top:437.50px;font-size:13px;line-height:13px;left:32.60px;width:600px;text-align:center;letter-spacing:.22px;">Filters</div>
<svg class="abs" style="left:474.5px;top:383px" width="48" height="48" viewBox="0 0 48 48"><defs><linearGradient id="g38" x1="0" y1="0" x2="1" y2="0"><stop offset="0" stop-color="#ff5a5a"/><stop offset=".2" stop-color="#e20000"/><stop offset=".45" stop-color="#ff1a1a"/><stop offset=".7" stop-color="#ff7a7a"/><stop offset="1" stop-color="#e83030"/></linearGradient><linearGradient id="g39" x1="0" y1="0" x2="1" y2="0"><stop offset="0" stop-color="#fff04a"/><stop offset=".2" stop-color="#ffc44a"/><stop offset=".62" stop-color="#fffbd8"/><stop offset=".85" stop-color="#ffd860"/><stop offset="1" stop-color="#fff04a"/></linearGradient><linearGradient id="g40" gradientUnits="userSpaceOnUse" x1="9.8" y1="0" x2="21.4" y2="0"><stop offset="0" stop-color="#ff5c5c"/><stop offset=".5" stop-color="#dc0000"/><stop offset="1" stop-color="#ff1010"/></linearGradient><linearGradient id="g41" gradientUnits="userSpaceOnUse" x1="21.4" y1="0" x2="32.5" y2="0"><stop offset="0" stop-color="#d6d8e8"/><stop offset=".7" stop-color="#f4f4fa"/><stop offset="1" stop-color="#ffffff"/></linearGradient><linearGradient id="g42" gradientUnits="userSpaceOnUse" x1="32.5" y1="0" x2="45.4" y2="0"><stop offset="0" stop-color="#62c800"/><stop offset=".55" stop-color="#2aa60a"/><stop offset="1" stop-color="#34cc34"/></linearGradient></defs><path d="M1.2 5.70 C4 7.00 7 8.00 10.5 7.60 C18 6.60 24 2.80 30.5 2.40 C33.5 2.30 35.5 3.30 36.8 4.40 L36.8 11.00 C35.5 9.90 33.5 8.90 30.5 9.00 C24 9.40 18 13.20 10.5 14.20 C7 14.60 4 13.60 1.2 12.30 Z" fill="url(#g38)"/><path d="M1.2 12.10 C4 13.40 7 14.40 10.5 14.00 C18 13.00 24 9.20 30.5 8.80 C33.5 8.70 35.5 9.70 36.8 10.80 L36.8 23.00 C35.5 21.90 33.5 20.90 30.5 21.00 C24 21.40 18 25.20 10.5 26.20 C7 26.60 4 25.60 1.2 24.30 Z" fill="url(#g39)"/><path d="M1.2 24.10 C4 25.40 7 26.40 10.5 26.00 C18 25.00 24 21.20 30.5 20.80 C33.5 20.70 35.5 21.70 36.8 22.80 L36.8 28.60 C35.5 27.50 33.5 26.50 30.5 26.60 C24 27.00 18 30.80 10.5 31.80 C7 32.20 4 31.20 1.2 29.90 Z" fill="url(#g38)"/><path d="M1.2 5.70 C4 7.00 7 8.00 10.5 7.60 C18 6.60 24 2.80 30.5 2.40 C33.5 2.30 35.5 3.30 36.8 4.40 L36.8 28.6 C35.5 27.5 33.5 26.5 30.5 26.6 C24 27 18 30.8 10.5 31.8 C7 32.2 4 31.2 1.2 29.9 Z" fill="none" stroke="#a02020" stroke-width=".8"/><clipPath id="c43"><rect x="9" y="10" width="12.399999999999999" height="40"/></clipPath><path clip-path="url(#c43)" d="M9.8 20.8 C13 22.4 17 22.6 21.4 22.2 C28 21.4 33 18 39.6 17.6 C42 17.5 44 18.2 45.2 19 L45.4 43.6 C44 42.6 42 41.8 39.6 41.9 C33 42.3 28 45.6 21.4 45.9 C17 46.2 13 46 9.8 44.5 Z" fill="url(#g40)"/><clipPath id="c44"><rect x="21.4" y="10" width="11.100000000000001" height="40"/></clipPath><path clip-path="url(#c44)" d="M9.8 20.8 C13 22.4 17 22.6 21.4 22.2 C28 21.4 33 18 39.6 17.6 C42 17.5 44 18.2 45.2 19 L45.4 43.6 C44 42.6 42 41.8 39.6 41.9 C33 42.3 28 45.6 21.4 45.9 C17 46.2 13 46 9.8 44.5 Z" fill="url(#g41)"/><clipPath id="c45"><rect x="32.5" y="10" width="13.5" height="40"/></clipPath><path clip-path="url(#c45)" d="M9.8 20.8 C13 22.4 17 22.6 21.4 22.2 C28 21.4 33 18 39.6 17.6 C42 17.5 44 18.2 45.2 19 L45.4 43.6 C44 42.6 42 41.8 39.6 41.9 C33 42.3 28 45.6 21.4 45.9 C17 46.2 13 46 9.8 44.5 Z" fill="url(#g42)"/><path d="M9.8 20.8 C13 22.4 17 22.6 21.4 22.2 C28 21.4 33 18 39.6 17.6 C42 17.5 44 18.2 45.2 19 L45.4 43.6 C44 42.6 42 41.8 39.6 41.9 C33 42.3 28 45.6 21.4 45.9 C17 46.2 13 46 9.8 44.5 Z" fill="none" stroke="#5a5a66" stroke-width=".8"/></svg>
<div class="t lnk" style="top:437.50px;font-size:13px;line-height:13px;left:198.30px;width:600px;text-align:center;letter-spacing:.22px;">Languages</div>
<svg class="abs" style="left:641px;top:383px" width="48" height="48" viewBox="0 0 48 48"><defs><linearGradient id="g46" x1="0" y1="0" x2=".6" y2="1"><stop offset="0" stop-color="#ffffff"/><stop offset=".45" stop-color="#fbfdff"/><stop offset="1" stop-color="#c4defb"/></linearGradient><linearGradient id="g47" x1="0" y1="0" x2="1" y2="1"><stop offset="0" stop-color="#ffffff"/><stop offset=".45" stop-color="#ffffff"/><stop offset=".5" stop-color="#e8ecf6"/><stop offset="1" stop-color="#c6cee6"/></linearGradient></defs><rect x="6.8" y="5.6" width="36.4" height="40.6" rx="3" fill="#000" opacity=".12"/><rect x="5.9" y="4.65" width="36.4" height="40.6" rx="3" fill="url(#g46)" stroke="#0c3c84" stroke-width="1.3"/><rect x="7.1" y="5.85" width="34" height="38.2" rx="2" fill="none" stroke="#4a96f0" stroke-width="1.1"/><path d="M35.4 35.6 L45.4 45.6" stroke="#a8620c" stroke-width="4.6" stroke-linecap="round"/><path d="M35.6 35.8 L45.2 45.4" stroke="#fbaa24" stroke-width="3" stroke-linecap="round"/><path d="M33.6 33.8 L35.4 35.6" stroke="#222" stroke-width="2"/><circle cx="27" cy="26.2" r="10.4" fill="#e9edf5" stroke="#5c5c5c" stroke-width=".9"/><circle cx="27" cy="26.2" r="8.9" fill="url(#g47)" stroke="#3c86e6" stroke-width=".9"/></svg>
<div class="t lnk" style="top:437.50px;font-size:13px;line-height:13px;left:364.50px;width:600px;text-align:center;letter-spacing:.22px;">Show Directives</div>
<svg class="abs" style="left:806px;top:383px" width="48" height="48" viewBox="0 0 48 48"><defs><linearGradient id="g48" x1="0" y1="0" x2=".5" y2="1"><stop offset="0" stop-color="#fff2b0"/><stop offset=".5" stop-color="#ffd860"/><stop offset="1" stop-color="#ffc010"/></linearGradient><linearGradient id="g49" x1="0" y1="0" x2=".6" y2="1"><stop offset="0" stop-color="#ffffff"/><stop offset=".5" stop-color="#f2f6fd"/><stop offset="1" stop-color="#cfe0f8"/></linearGradient><linearGradient id="g50" x1="0" y1="0" x2="0" y2="1"><stop offset="0" stop-color="#2a62e0"/><stop offset=".3" stop-color="#9ccaff"/><stop offset=".55" stop-color="#3c80f4"/><stop offset="1" stop-color="#1a50d8"/></linearGradient><radialGradient id="g51" cx=".4" cy=".35" r=".8"><stop offset="0" stop-color="#7cf07c"/><stop offset=".5" stop-color="#2fc02f"/><stop offset="1" stop-color="#158a15"/></radialGradient></defs><path d="M3.4 14.8 Q2.4 15 2.6 16.4 L10.6 43.6 Q11.2 45.4 12.6 45 L37.6 39 Q39 38.6 38.4 37.2 L27.6 13.6 Q27 12.4 25.6 12.6 Z" fill="url(#g48)" stroke="#a83a10" stroke-width="1.1" stroke-linejoin="round"/><path d="M3.4 16 L11.4 43.4 L12.8 44.2" fill="none" stroke="#ff8a10" stroke-width="1.4"/><path d="M6.6 16.7 L25.5 15.3 L34.9 35 L14.6 39.6 Z" fill="url(#g49)" stroke="#2250c4" stroke-width="1" stroke-linejoin="round"/><path d="M20.6 32 L29 26.6 L34 35 L27 36.6 Z" fill="#7ea6e8" opacity=".75"/><ellipse cx="15.2" cy="15" rx="5.4" ry="3.9" fill="url(#g51)" stroke="#0e7a0e" stroke-width="1" transform="rotate(8 15.2 15)"/><g transform="translate(20.6 32) rotate(-45.5)"><path d="M0 0 L8 -3.4 L8 3.4 Z" fill="#ffe9b4" stroke="#1a30a8" stroke-width=".7" stroke-linejoin="round"/><path d="M0 0 L3 -1.3 L3 1.3 Z" fill="#101a90"/><path d="M8 -3.7 L32.4 -3.7 Q35.4 -3.6 35.4 0 Q35.4 3.6 32.4 3.7 L8 3.7 Z" fill="url(#g50)" stroke="#1a46c8" stroke-width=".8"/><rect x="9" y="-2.4" width="22.5" height="2" fill="#d2e8ff" opacity=".8"/><path d="M31.6 -3.6 Q30.4 0 31.6 3.6" fill="none" stroke="#1a50d0" stroke-width=".6" opacity=".7"/></g></svg>
<div class="t lnk" style="top:437.50px;font-size:13px;line-height:13px;left:530.00px;width:600px;text-align:center;letter-spacing:.22px;">Edit Directives</div>
<div class="hr" style="left:289px;top:474px;width:751px"></div>
<div class="t " style="top:495.86px;font-size:16px;line-height:16px;color:#2c2c2c;left:246.80px;letter-spacing:1.064px;text-shadow:.45px 0 0 #2c2c2c;">Per-Directory Options</div>
<div class="panel" style="left:247px;top:530px;width:835px;height:90px"></div>
<svg class="abs" style="left:363px;top:546px" width="48" height="48" viewBox="0 0 48 48"><defs><linearGradient id="g52" x1="0" y1="0" x2=".3" y2="1"><stop offset="0" stop-color="#f4f9ff"/><stop offset=".5" stop-color="#d2e6fd"/><stop offset="1" stop-color="#a8cffb"/></linearGradient><linearGradient id="g53" x1="0" y1="0" x2="0" y2="1"><stop offset="0" stop-color="#7cbafb"/><stop offset="1" stop-color="#2a86f4"/></linearGradient><linearGradient id="g54" x1="0" y1="0" x2="1" y2="1"><stop offset="0" stop-color="#3a8af0"/><stop offset="1" stop-color="#1450b8"/></linearGradient></defs><path d="M40.4 20.7 L47.2 20.3 L42.3 37.2 Z" fill="url(#g54)" stroke="#1446b0" stroke-width=".9" stroke-linejoin="round"/><path d="M1.4 13 Q1.3 10.6 3.4 10.2 L10.4 9.7 Q11.7 9.7 12.3 10.9 L13.3 12.9 L37.2 9.5 Q38.3 9.4 38.5 10.5 L42.3 37.2 L9.6 42.3 Q8.5 42.4 7.7 41.5 L5.4 38.8 Q4.8 38.1 4.7 37.2 Z" fill="url(#g52)" stroke="#1f5acc" stroke-width="1.1" stroke-linejoin="round"/><path d="M7.6 36.6 C8.5 24 22 25.5 30 22 C35 20 37.5 17 38.6 13 L42 37 L9.6 42 L6.2 38.6 Z" fill="url(#g53)"/><path d="M3 12.4 L3.6 11.4 L10.6 10.9 L11.4 11.7 L12.6 14 L37.2 10.6" fill="none" stroke="#ffffff" stroke-width="1" opacity=".9"/><path d="M35.3 36.8 L39.4 31.4" stroke="#fff" stroke-width="1" stroke-linecap="round"/></svg>
<div class="t lnk" style="left:279px;top:594.5px;font-size:13px;line-height:13px;letter-spacing:.16px">Directory <span style="font-family:'Liberation Mono',monospace;font-size:13.4px;letter-spacing:0">/home/domain.com/www</span></div>
<div class="tbl" style="left:247px;top:633px;width:386px;height:104px"><div class="th" style="height:23px"></div></div>
<div class="t " style="top:639.70px;font-size:13px;line-height:13px;color:#fff;font-weight:bold;left:250.90px;letter-spacing:-0.038px;">Create Per-Directory, Files or Location Options</div>
<div class="t " style="top:663.60px;font-size:13px;line-height:13px;color:#222;font-weight:bold;left:252.50px;">Type</div>
<div class="t " style="top:687.60px;font-size:13px;line-height:13px;color:#222;font-weight:bold;left:252.50px;">Regexp?</div>
<div class="t " style="top:712.10px;font-size:13px;line-height:13px;color:#222;font-weight:bold;left:252.50px;">Path</div>
<div class="inp" style="left:311px;top:662px;width:79px;height:20px;border-color:#dfe3ee;border-radius:3px"></div>
<div class="t " style="top:665.70px;font-size:13px;line-height:13px;color:#111;left:315.60px;letter-spacing:0.186px;">Directory</div>
<svg class="abs" style="left:376px;top:670px" width="9" height="5" viewBox="0 0 9 5"><path d="M0.5 0.5 L8.5 0.5 L4.5 4.6 Z" fill="#111"/></svg>
<div class="radio on" style="left:315.7px;top:690.2px"></div>
<div class="t " style="top:690.70px;font-size:13px;line-height:13px;color:#222;left:335.70px;letter-spacing:0.137px;">Exact match</div>
<div class="radio" style="left:418.0px;top:690.2px"></div>
<div class="t " style="top:690.70px;font-size:13px;line-height:13px;color:#222;left:437.60px;letter-spacing:0.112px;">Match regexp</div>
<div class="inp" style="left:311px;top:709px;width:315px;height:21px"></div>
<div class="btn" style="left:251px;top:741px;width:60px;height:22px"></div>
<div class="t " style="top:746.10px;font-size:13px;line-height:13px;color:#111;left:261.70px;letter-spacing:0.076px;">Create</div>
<div class="hr" style="left:289px;top:780px;width:751px"></div>
<div class="tbl" style="left:247px;top:788px;width:564px;height:136px"><div class="th" style="height:23px"></div></div>
<div class="t " style="top:795.00px;font-size:13px;line-height:13px;color:#fff;font-weight:bold;left:250.50px;letter-spacing:-0.022px;">Virtual Server Details</div>
<div class="t " style="top:818.90px;font-size:13px;line-height:13px;color:#222;font-weight:bold;left:252.60px;letter-spacing:-.1px;">Address</div>
<div class="t " style="top:844.90px;font-size:13px;line-height:13px;color:#222;font-weight:bold;left:252.60px;letter-spacing:-.1px;">Port</div>
<div class="t " style="top:870.90px;font-size:13px;line-height:13px;color:#222;font-weight:bold;left:252.60px;letter-spacing:-.1px;">Document Root</div>
<div class="t " style="top:898.50px;font-size:13px;line-height:13px;color:#222;font-weight:bold;left:252.60px;letter-spacing:-.1px;">Server Name</div>
<div class="radio" style="left:357.9px;top:820.3px"></div>
<div class="t " style="top:820.70px;font-size:13px;line-height:13px;color:#222;left:376.50px;letter-spacing:0.229px;">Default server</div>
<div class="radio on" style="left:468.6px;top:820.3px"></div>
<div class="t " style="top:820.70px;font-size:13px;line-height:13px;color:#222;left:488.00px;letter-spacing:0.499px;">Any</div>
<div class="radio" style="left:520.0px;top:820.3px"></div>
<div class="inp" style="left:540px;top:816px;width:257px;height:21px"></div>
<div class="radio on" style="left:357.9px;top:846.0px"></div>
<div class="t " style="top:846.70px;font-size:13px;line-height:13px;color:#222;left:376.50px;letter-spacing:0.318px;">Default</div>
<div class="radio" style="left:428.9px;top:846.0px"></div>
<div class="t " style="top:846.70px;font-size:13px;line-height:13px;color:#222;left:448.20px;letter-spacing:0.499px;">Any</div>
<div class="radio" style="left:480.6px;top:846.0px"></div>
<div class="inp" style="left:500px;top:842px;width:52px;height:21px"></div>
<div class="radio" style="left:357.9px;top:873.7px"></div>
<div class="t " style="top:873.50px;font-size:13px;line-height:13px;color:#222;left:376.50px;letter-spacing:0.318px;">Default</div>
<div class="radio on" style="left:429.0px;top:873.7px"></div>
<div class="inp" style="left:449px;top:869px;width:315px;height:21px"></div>
<div class="t " style="top:873.50px;font-size:13px;line-height:13px;color:#111;left:453.20px;letter-spacing:0.056px;">/home/domain.com/www</div>
<div class="btn" style="left:769px;top:869px;width:34px;height:22px"></div>
<div class="t " style="top:872.00px;font-size:13px;line-height:13px;color:#111;left:780.20px;letter-spacing:1px;">...</div>
<div class="radio" style="left:357.9px;top:900.0px"></div>
<div class="t " style="top:900.40px;font-size:13px;line-height:13px;color:#222;left:376.50px;letter-spacing:0.318px;">Default</div>
<div class="radio on" style="left:429.0px;top:900.0px"></div>
<div class="inp" style="left:449px;top:896px;width:198px;height:21px"></div>
<div class="t " style="top:900.40px;font-size:13px;line-height:13px;color:#111;left:453.20px;">domain.com</div>
<div class="btn" style="left:251px;top:928px;width:52px;height:22px"></div>
<div class="t " style="top:932.50px;font-size:13px;line-height:13px;color:#111;left:262.00px;letter-spacing:0.422px;">Save</div>
<div class="btn" style="left:309px;top:928px;width:59px;height:22px"></div>
<div class="t " style="top:932.50px;font-size:13px;line-height:13px;color:#111;left:319.20px;letter-spacing:0.364px;">Delete</div>
<svg class="abs" style="left:248px;top:967.6px" width="16" height="16" viewBox="0 0 16 16"><path d="M1 8 L9 1 L9 5 L15 5 L15 11 L9 11 L9 15 Z" fill="#8db6f2" stroke="#6a98e0" stroke-width=".7"/></svg>
<div class="t lnk" style="top:970.00px;font-size:13px;line-height:13px;left:271.20px;letter-spacing:.16px;">Return to server list</div>
</div></div>
<div id="front" class="abs">
<div id="ffbtn" class="abs"></div>
<div class="t " style="top:2.70px;font-size:13px;line-height:13px;color:#fff;font-weight:bold;left:26.70px;letter-spacing:-0.407px;text-shadow:0 1px 1px rgba(120,50,0,.7);">Firefox</div>
<svg class="abs" style="left:75px;top:7.5px" width="8" height="5" viewBox="0 0 8 5"><path d="M0 0 L8 0 L4 4.6 Z" fill="#fff"/></svg>
<div id="wc" class="abs"><div class="abs" id="wcmin"></div><div class="abs" id="wcmax"></div><div class="abs" id="wcclose"></div></div>
<div class="abs" style="left:1015.5px;top:9.5px;width:12px;height:5px;background:#fff;border:1px solid #535c6b;border-radius:1px"></div>
<div class="abs" style="left:1042.5px;top:4.5px;width:12px;height:10px;background:#fff;border:1px solid #535c6b;border-radius:1px"></div><div class="abs" style="left:1045.5px;top:7.5px;width:6px;height:4px;background:#a9bad2;border:1px solid #535c6b"></div>
<div class="t " style="top:-0.19px;font-size:17px;line-height:17px;color:#fff;font-weight:bold;left:784.50px;width:600px;text-align:center;text-shadow:0 0 2px #501010,0 0 1px #501010;transform:scaleX(1.25);">x</div>
<svg class="abs" style="left:6px;top:24px" width="262" height="24" viewBox="0 0 262 24"><defs><linearGradient id="tg" x1="0" y1="0" x2="0" y2="1"><stop offset="0" stop-color="#fbfcfe"/><stop offset="1" stop-color="#e3eaf6"/></linearGradient></defs><path d="M0 24 C4 23.5 6 21 6.5 18 L6.5 5 C6.5 2.5 8 1.5 10 1.5 L251 1.5 C253.5 1.5 255 2.5 255 5 L255 18 C255.5 21 257.5 23.5 262 24 Z" fill="url(#tg)" stroke="#8d9bb3" stroke-width="1"/><rect x="0" y="23" width="262" height="1.5" fill="#e3eaf6"/></svg>
<svg class="abs" style="left:18.5px;top:28.5px" width="15" height="16" viewBox="0 0 15 16"><path d="M4.6 2.2 L6 1 L9.5 1.8 L9 5.6 L13.4 7.4 L13 12.8 L10 11.6 L8 12.4 L5.8 14.8 L3.2 13 L3.9 10 L1 8.6 L1.5 5.5 L5 5.7 Z" fill="#f2f6fd" stroke="#2f5fc4" stroke-width="1.9" stroke-linejoin="round"/><path d="M5 5.7 L7.4 8.4 L9 5.6 M7.4 8.4 L8 12.4" fill="none" stroke="#2f5fc4" stroke-width="1.1" opacity=".8"/></svg>
<div class="t " style="top:29.59px;font-size:12px;line-height:12px;color:#111;left:36.45px;letter-spacing:-0.060px;">Webmin 1.530  on bogdanfr (Debian Li...</div>
<div class="abs" style="left:264px;top:25.5px;width:29px;height:21px;border:1px solid #7e8da6;border-bottom:none;border-radius:3px 3px 0 0;background:linear-gradient(#c3cedd,#aab8cc)"></div>
<div class="abs" style="left:273px;top:35px;width:11px;height:2px;background:#2c3440"></div><div class="abs" style="left:277.5px;top:30.5px;width:2px;height:11px;background:#2c3440"></div>
<svg class="abs" style="left:1061.5px;top:33.5px" width="6" height="4" viewBox="0 0 6 4"><path d="M0 0 L6 0 L3 3.2 Z" fill="#7a746c"/></svg>
<svg class="abs" style="left:1083px;top:28px" width="15" height="15" viewBox="0 0 15 15"><g fill="#8494a3" stroke="#5c6c7b" stroke-width=".8"><rect x=".6" y=".6" width="7.6" height="5"/><rect x="10.4" y=".6" width="3.4" height="5"/><rect x=".6" y="8" width="4" height="6"/><rect x="6.8" y="8" width="7" height="6"/></g></svg>
<div class="nb" style="left:38px;top:54.5px;width:26.5px;height:23px;border-radius:0 3px 3px 0"></div>
<div class="nb" style="left:71.5px;top:54.5px;width:29px;height:23px"></div>
<div class="nb" style="left:107px;top:54.5px;width:29.5px;height:23px"></div>
<div class="abs" style="left:11.5px;top:50.5px;width:31px;height:31px;border-radius:50%;border:1px solid #9aa5b6;background:linear-gradient(#ffffff,#e9eef6 60%,#dfe6f1);box-shadow:0 1px 2px rgba(60,70,90,.45)"></div>
<svg class="abs" style="left:19px;top:58px" width="16" height="16" viewBox="0 0 16 16"><path d="M8.2 0.8 L1 8 L8.2 15.2 L10.5 12.9 L7.3 9.7 L15 9.7 L15 6.3 L7.3 6.3 L10.5 3.1 Z" fill="#3f4954" stroke="#2b333c" stroke-width=".7" stroke-linejoin="round"/></svg>
<svg class="abs" style="left:45.5px;top:59.5px" width="13" height="13" viewBox="0 0 13 13"><path d="M6.3 0.8 L12.2 6.5 L6.3 12.2 L4.7 10.6 L7.6 7.7 L0.8 7.7 L0.8 5.3 L7.6 5.3 L4.7 2.4 Z" fill="#a9b1bd"/></svg>
<svg class="abs" style="left:78px;top:58.5px" width="16" height="14" viewBox="0 0 16 14"><path d="M8 0.3 L15.8 7.4 L13.4 7.4 L13.4 13.5 L9.6 13.5 L9.6 9 L6.4 9 L6.4 13.5 L2.6 13.5 L2.6 7.4 L0.2 7.4 Z" fill="#404a55"/></svg>
<svg class="abs" style="left:114.5px;top:58.5px" width="14" height="15" viewBox="0 0 14 15"><path d="M10.6 10.6 A4.9 4.9 0 1 1 9.4 4.0" fill="none" stroke="#404a55" stroke-width="2.4"/><path d="M6.8 1.0 L13.2 1.0 L13.2 7.4 Z" fill="#404a55"/></svg>
<div class="abs" style="left:143px;top:54px;width:546px;height:24px;border:1px solid #97a2b4;border-radius:3px;background:linear-gradient(#f4f6fb,#ffffff 30%)"></div>
<div class="abs" style="left:146px;top:57px;width:114px;height:18px;border-radius:2px;background:linear-gradient(#7590c8,#4f6fb2 50%,#5a7abb)"></div>
<div class="abs" style="left:166px;top:62.5px;width:88px;height:3px;background:#c3d0ea;opacity:.75;filter:blur(1.2px)"></div><div class="abs" style="left:166px;top:68px;width:88px;height:2px;background:#9fb3dc;opacity:.6;filter:blur(1.2px)"></div>
<svg class="abs" style="left:149.5px;top:58.5px" width="15" height="16" viewBox="0 0 15 16"><path d="M4.6 2.2 L6 1 L9.5 1.8 L9 5.6 L13.4 7.4 L13 12.8 L10 11.6 L8 12.4 L5.8 14.8 L3.2 13 L3.9 10 L1 8.6 L1.5 5.5 L5 5.7 Z" fill="#5b7cc0" stroke="#ffffff" stroke-width="1.9" stroke-linejoin="round"/><path d="M5 5.7 L7.4 8.4 L9 5.6 M7.4 8.4 L8 12.4" fill="none" stroke="#ffffff" stroke-width="1.1" opacity=".8"/></svg>
<div class="abs" style="left:266px;top:62px;width:170px;height:9px;background:linear-gradient(90deg,#8a8a8a,#b5b5b5 30%,#c9c9c9 60%,#b9b9b9);filter:blur(1.6px);opacity:.9"></div>
<div class="abs" style="left:264px;top:64px;width:60px;height:3px;background:#444;filter:blur(1.3px);opacity:.6"></div>
<svg class="abs" style="left:651.5px;top:57px" width="18" height="18" viewBox="0 0 18 18"><path d="M9 1.2 L11.3 6.6 L17 7.1 L12.7 10.9 L14 16.6 L9 13.6 L4 16.6 L5.3 10.9 L1 7.1 L6.7 6.6 Z" fill="#f7f7f7" stroke="#8a8f98" stroke-width="1.1" stroke-linejoin="round"/></svg>
<svg class="abs" style="left:676px;top:65px" width="7" height="4" viewBox="0 0 7 4"><path d="M0 0 L7 0 L3.5 3.6 Z" fill="#666"/></svg>
<div class="abs" style="left:694px;top:54px;width:410px;height:24px;border:1px solid #97a2b4;border-radius:3px;background:linear-gradient(#f4f6fb,#ffffff 30%)"></div>
<svg class="abs" style="left:699px;top:57.5px" width="16" height="16" viewBox="0 0 16 16"><rect x="0" y="0" width="16" height="16" rx="2.5" fill="#f6f7fa"/><path d="M8.6 0 L13.5 0 Q16 0 16 2.5 L16 5.6 L8.6 5.6 Z" fill="#e8201c"/><path d="M8.6 5.6 L16 5.6 L16 13.5 Q16 16 13.5 16 L10 16 Q8 13 8.6 10 Z" fill="#1c8a3c"/><ellipse cx="4.7" cy="13" rx="3.6" ry="2.4" fill="#f5b50f"/><ellipse cx="4.6" cy="3.9" rx="2.3" ry="2.9" fill="#2a62d8"/><path d="M1.2 6.4 L5.2 8.6 L1.2 10.4 Z" fill="#2a62d8"/></svg>
<svg class="abs" style="left:718.5px;top:65px" width="6" height="4" viewBox="0 0 6 4"><path d="M0 0 L6 0 L3 3.4 Z" fill="#555"/></svg>
<div class="t " style="top:60.34px;font-size:12px;line-height:12px;color:#666;font-style:italic;left:730.70px;letter-spacing:-0.459px;">Google</div>
<svg class="abs" style="left:1084px;top:58px" width="16" height="16" viewBox="0 0 16 16"><circle cx="10" cy="6" r="4" fill="#fff" stroke="#2b62a6" stroke-width="1.9"/><path d="M7 9 L1.8 14.2" stroke="#2b62a6" stroke-width="2.4" stroke-linecap="round"/></svg>
<div class="abs" style="left:1091px;top:112px;width:16px;height:863px;background:linear-gradient(90deg,#e9e9e9,#f3f3f3 30%,#f0f0f0)"></div>
<div class="abs" style="left:1091.5px;top:131px;width:14.5px;height:802.5px;border:1px solid #989898;border-radius:2.5px;background:linear-gradient(90deg,#f7f7f7,#e9e9ea 45%,#d2d2d4 55%,#c3c3c6);box-shadow:inset 0 0 0 1px rgba(255,255,255,.7)"></div>
<div class="abs" style="left:1095px;top:528px;width:8px;height:1px;background:#707070"></div><div class="abs" style="left:1095px;top:530px;width:8px;height:1px;background:#707070"></div><div class="abs" style="left:1095px;top:532px;width:8px;height:1px;background:#707070"></div><div class="abs" style="left:1095px;top:534px;width:8px;height:1px;background:#707070"></div>
<svg class="abs" style="left:1095px;top:119.5px" width="8" height="5" viewBox="0 0 8 5"><path d="M0 5 L8 5 L4 0.4 Z" fill="#3a3a3a"/></svg>
<svg class="abs" style="left:1095px;top:964.5px" width="8" height="5" viewBox="0 0 8 5"><path d="M0 0 L8 0 L4 4.6 Z" fill="#3a3a3a"/></svg>
<div class="abs" style="left:8px;top:112px;width:1px;height:863px;background:#8da3c0"></div><div class="abs" style="left:1107px;top:47px;width:1px;height:928px;background:#9db4d2"></div><div class="abs" style="left:8px;top:975px;width:1100px;height:1px;background:#6f86a6"></div>
<div class="abs" style="left:9px;top:111px;width:1098px;height:1px;background:#7f90aa"></div>
</div>
</body></html>
